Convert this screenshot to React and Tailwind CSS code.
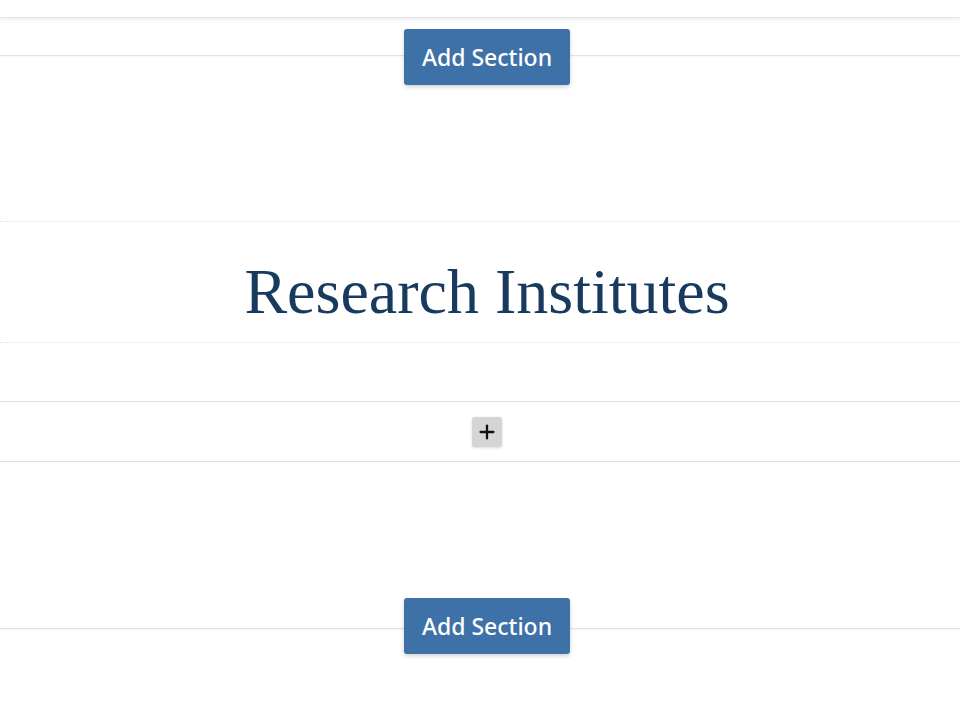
import { Plus } from 'lucide-react'

// Divider row with a centred "Add Section" button sitting over a rule
function AddSectionRow({ className = '', lineTop = 'top-1/2' }) {
  return (
    <div className={`relative flex justify-center ${className}`}>
      <div className={`absolute left-0 right-0 ${lineTop} border-t border-[#e2e2e2] shadow-[0_1px_2px_rgba(0,0,0,0.06)]`}></div>
      <button className="relative ml-[14px] h-[56px] w-[166px] rounded-[3px] bg-[#3e71a7] text-white text-[23px] font-medium shadow-[0_2px_4px_rgba(0,0,0,0.18)] font-['Noto_Sans',sans-serif]">
        Add Section
      </button>
    </div>
  )
}

export default function App() {
  return (
    <div className="w-[960px] h-[720px] bg-white overflow-hidden">
      {/* top edge of previous block */}
      <div className="h-[18px] border-b border-[#e6e6e6] shadow-[0_2px_4px_rgba(0,0,0,0.07)]"></div>

      <AddSectionRow className="mt-[11px]" lineTop="top-[26px]" />

      {/* Heading block */}
      <div className="mt-[136px] h-[122px] border-y border-dotted border-[#e0e0f2] flex items-center justify-center">
        <h1 className="ml-[14px] pt-[19px] text-[#173a5e] text-[64px] font-['Liberation_Serif',serif] leading-none">
          Research Institutes
        </h1>
      </div>

      {/* Empty block with add control */}
      <div className="mt-[58px] h-[61px] border-y border-[#dedede] flex items-center justify-center">
        <button className="ml-[14px] flex h-[30px] w-[30px] items-center justify-center rounded-[3px] bg-[#d5d5d5] shadow-[0_1px_3px_rgba(0,0,0,0.15)]">
          <Plus size={22} strokeWidth={2.5} className="text-[#111]" />
        </button>
      </div>

      <AddSectionRow className="mt-[136px]" lineTop="top-[30px]" />
    </div>
  )
}
